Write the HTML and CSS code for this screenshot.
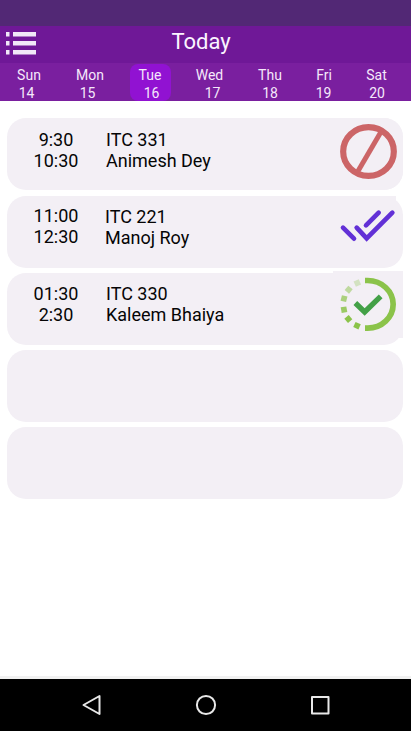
FILE: index.html
```html
<!DOCTYPE html>
<html lang="en">
<head>
<meta charset="utf-8">
<title>Today</title>
<link rel="stylesheet" href="styles.css">
</head>
<body>
<div class="status"></div>
<header class="bar">
  <svg class="menu" viewBox="0 0 30 24" fill="#f1e8f8"><path d="M0 1h3.5v4.5H0zM7 1h23v4.5H7zM0 10h3.5v4.5H0zM7 10h23v4.5H7zM0 19h3.5v4.5H0zM7 19h23v4.5H7z"/></svg>
  <h1>Today</h1>
</header>
<nav class="days">
  <div class="day sun"><span>Sun</span><span class="num">14</span></div>
  <div class="day mon"><span>Mon</span><span class="num">15</span></div>
  <div class="day tue active"><span>Tue</span><span class="num">16</span></div>
  <div class="day wed"><span>Wed</span><span class="num">17</span></div>
  <div class="day thu"><span>Thu</span><span class="num">18</span></div>
  <div class="day fri"><span>Fri</span><span class="num">19</span></div>
  <div class="day sat"><span>Sat</span><span class="num">20</span></div>
</nav>
<main class="list">
  <section class="card first">
    <div class="time">9:30<br>10:30</div>
    <div class="info">ITC 331<br>Animesh Dey</div>
    <svg class="icon cancel" viewBox="24 24 210 216" fill="none" stroke="#cc6567"><ellipse cx="130.5" cy="124.5" rx="76" ry="73" stroke-width="18.5"/><path d="M97 187L169 64" stroke-width="15"/></svg>
  </section>
  <section class="card second">
    <div class="time">11:00<br>12:30</div>
    <div class="info">ITC 221<br>Manoj Roy</div>
    <svg class="icon done" viewBox="24 18 189 201" fill="none" stroke="#6230d6" stroke-width="14" stroke-linecap="round"><path d="M54 113l33 33M95 113l30 32 77-77M123 106l38-38"/></svg>
  </section>
  <section class="card third">
    <div class="time">01:30<br>2:30</div>
    <div class="info">ITC 330<br>Kaleem Bhaiya</div>
    <svg class="icon progress" viewBox="24 27 210 201">
      <path d="M120 55.5h8a76.5 71.5 0 0 1 0 143h-8" fill="none" stroke="#8bc34a" stroke-width="17"/>
      <path d="M91 123l28 27 48-47" fill="none" stroke="#43a047" stroke-width="16"/>
      <g fill="#8bc34a">
        <rect x="-8.5" y="-8.5" width="17" height="17" transform="translate(97 63) rotate(-24)" opacity=".3"/>
        <rect x="-8.5" y="-8.5" width="17" height="17" transform="translate(71 83) rotate(40)" opacity=".5"/>
        <rect x="-8.5" y="-8.5" width="17" height="17" transform="translate(57 110) rotate(14)" opacity=".7"/>
        <rect x="-8.5" y="-8.5" width="17" height="17" transform="translate(57 143) rotate(-10)" opacity=".85"/>
        <rect x="-8.5" y="-8.5" width="17" height="17" transform="translate(70 171) rotate(-40)"/>
        <rect x="-8.5" y="-8.5" width="17" height="17" transform="translate(96 191) rotate(24)"/>
      </g>
    </svg>
  </section>
  <section class="card"></section>
  <section class="card"></section>
</main>
<footer class="nav">
  <svg viewBox="0 0 24 24"><path d="M3.5 12L19.5 3v18z"/></svg>
  <svg viewBox="0 0 24 24"><circle cx="12" cy="12" r="9.1"/></svg>
  <svg viewBox="0 0 24 24"><path d="M4 4h16.5v16.5H4z"/></svg>
</footer>
</body>
</html>
```
FILE: styles.css
```css
* { box-sizing: border-box; }
body {
  margin: 0;
  height: 731px;
  display: flex;
  flex-direction: column;
  overflow: hidden;
  background: #fff;
  font-family: Roboto, "Liberation Sans", sans-serif;
  color: #050505;
}
.status { height: 25.5px; background: #522875; }
.bar {
  height: 37.5px;
  background: #6f1897;
  display: grid;
  grid-template-columns: 36px 1fr 51px;
  padding-left: 6px;
}
.menu { width: 30px; height: 24px; margin-top: 5px; }
h1 {
  margin: 3px 0 0;
  font-size: 22px;
  line-height: 26px;
  font-weight: 400;
  text-align: center;
  color: #fbf4ff;
}
.days {
  height: 38px;
  background: #7a1f9f;
  display: grid;
  grid-template-columns: 58px 64px 56px 63px 58px 50px 55px;
  justify-items: center;
  color: #f5e8fb;
  font-size: 14px;
  line-height: 18px;
}
.day {
  width: 41px;
  height: 37px;
  margin-top: 1px;
  padding-top: 2px;
  display: flex;
  flex-direction: column;
  align-items: center;
}
.sun .num, .mon .num { padding-right: 5px; }
.tue .num { padding-left: 3px; }
.wed .num { padding-left: 6px; }
.fri .num { padding-right: 1px; }
.sat .num { padding-left: 1px; }
.active { background: #9112d2; border-radius: 8px; }
.list {
  flex: 1;
  padding: 17px 8px 0 7px;
  display: flex;
  flex-direction: column;
  gap: 5px;
  border-bottom: 3px solid #f1f1f1;
}
.card {
  height: 72px;
  border-radius: 19px;
  background: #f3eff5;
  display: grid;
  grid-template-columns: 99px 1fr 70px;
  align-items: start;
  font-size: 18px;
  line-height: 21px;
}
.first { margin-bottom: 1px; }
.time { text-align: center; padding-top: 11px; margin-right: 1px; }
.info { padding-top: 11px; }
.second .time { padding-top: 9px; }
.second .info { padding-top: 10px; margin-left: -1px; }
.third .time, .third .info { padding-top: 10px; }
.icon { display: block; background: #f3eff5; }
.cancel { width: 70px; height: 72px; border-radius: 0 19px 19px 0; }
.done { width: 63px; height: 67px; }
.progress { width: 70px; height: 67px; margin-top: -2px; }
.nav {
  height: 52px;
  background: #000;
  display: flex;
  justify-content: space-between;
  align-items: center;
  padding: 0 79px 0 80px;
}
.nav svg {
  width: 24px;
  height: 24px;
  fill: none;
  stroke: #e8e8e8;
  stroke-width: 2;
  stroke-linejoin: round;
}
```
